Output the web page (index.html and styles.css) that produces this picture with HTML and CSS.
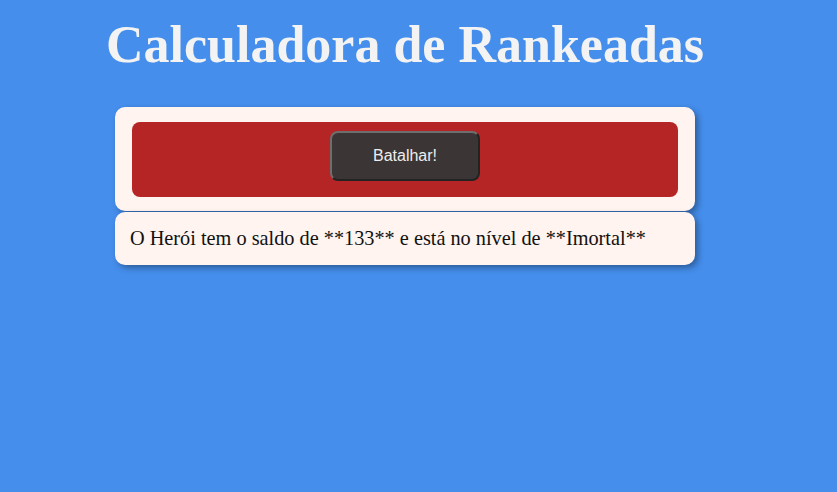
FILE: index.html
```html
<!DOCTYPE html>
<html lang="pt">
<head>
<meta charset="utf-8">
<title>Calculadora de Rankeadas</title>
<link rel="stylesheet" href="styles.css">
</head>
<body>
<main class="wrap">
  <h1 class="title">Calculadora de Rankeadas</h1>
  <section class="card card-top">
    <div class="panel">
      <button class="btn" type="button">Batalhar!</button>
    </div>
  </section>
  <section class="card card-result">
    <p class="result">O Herói tem o saldo de **133** e está no nível de **Imortal**</p>
  </section>
</main>
</body>
</html>
```
FILE: styles.css
```css
html, body {
  margin: 0;
  padding: 0;
  background: #458eec;
}
body {
  font-family: "Liberation Serif", "Times New Roman", serif;
  min-height: 492px;
}
.wrap {
  width: 580px;
  margin-left: 115px;
  display: flex;
  flex-direction: column;
}
.title {
  margin: 15px 0 32px;
  width: 597px;
  margin-left: -9px;
  font-size: 52px;
  line-height: 60px;
  font-weight: bold;
  color: #f3f3f3;
  text-align: center;
  white-space: nowrap;
}
.card {
  background: #fff4ef;
  border-radius: 10px;
  box-shadow: 3px 3px 6px rgba(0, 0, 0, 0.35);
}
.card-top {
  padding: 15px 17px 14px;
  height: 104px;
  box-sizing: border-box;
}
.panel {
  background: #b52525;
  border-radius: 8px;
  height: 75px;
  display: flex;
  justify-content: center;
  padding-top: 9px;
  box-sizing: border-box;
}
.btn {
  width: 150px;
  height: 50px;
  box-sizing: border-box;
  background: #3b3535;
  color: #eeeeee;
  font-family: "Liberation Sans", Arial, sans-serif;
  font-size: 16px;
  border-radius: 8px;
  border: 2px solid;
  border-color: #6e6e6e #232323 #232323 #6e6e6e;
  cursor: pointer;
}
.card-result {
  margin-top: 1px;
  height: 53px;
  box-sizing: border-box;
  padding: 0 15px;
  display: flex;
  align-items: center;
}
.result {
  margin: 0;
  font-size: 20.3px;
  color: #111;
}
```
